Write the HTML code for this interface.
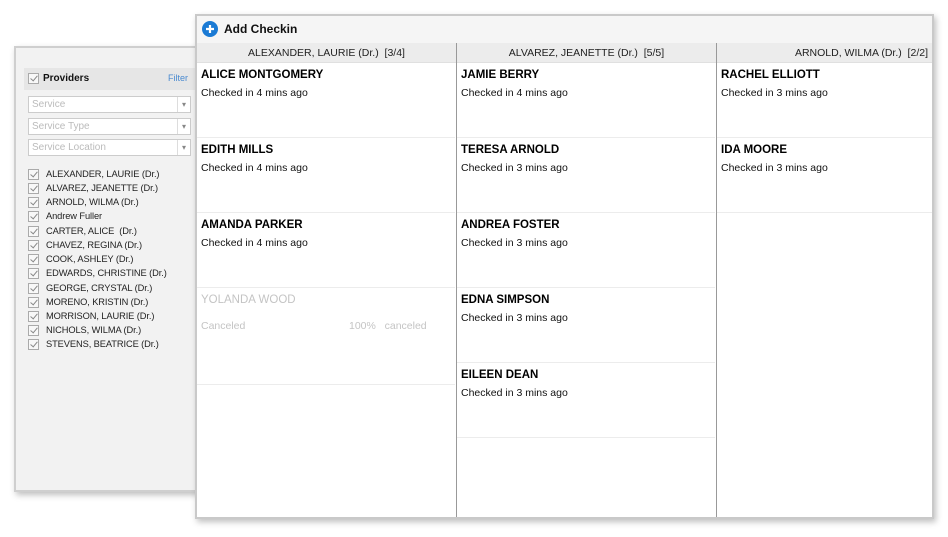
<!DOCTYPE html><html><head><style>
*{margin:0;padding:0;box-sizing:border-box}
body{width:948px;height:533px;background:#fff;position:relative;overflow:hidden;font-family:"Liberation Sans",sans-serif;font-size:11px;color:#111}
.lp{position:absolute;left:14px;top:46px;width:184px;height:446px;background:#f2f2f2;border:2px solid #cfcfcf;box-shadow:2px 3px 6px rgba(0,0,0,.25)}
.ph{position:absolute;left:8px;top:20px;width:172px;height:22px;background:#e6e6e6}
.cb{display:inline-block;width:11px;height:11px;border:1px solid #aaa;background:#f8f8f8;position:relative;vertical-align:middle}
.cb:after{content:"";position:absolute;left:3px;top:0px;width:3px;height:6px;border:solid #888;border-width:0 1.5px 1.5px 0;transform:rotate(40deg)}
.dd{position:absolute;left:12px;width:163px;height:17px;border:1px solid #ccc;background:#fff;color:#bbb;padding:2px 3px;font-size:10px}
.dd:after{content:"▾";position:absolute;right:0;top:0;width:12px;height:15px;border-left:1px solid #ddd;color:#888;font-size:8px;text-align:center;line-height:15px}
.pl{position:absolute;left:12px;font-size:9.3px;color:#222;letter-spacing:-0.1px}
.pl .cb{margin-right:7px;width:11px;height:11px}
.win{position:absolute;left:195px;top:14px;width:739px;height:505px;border:2px solid #c9c9c9;background:#fff;box-shadow:2px 3px 6px rgba(0,0,0,.25)}
.tb{position:absolute;left:0;top:0;width:735px;height:27px;background:#f5f5f5}
.hd{position:absolute;top:27px;height:20px;background:#ececec;border-bottom:1px solid #e0e0e0;font-size:10.5px;line-height:20px;color:#222}
.col{position:absolute;top:27px;height:474px;border-left:1px solid #999}
.card{position:absolute;left:0;width:258px;height:75px;border-bottom:1px solid #ececec}
.card b{position:absolute;left:4px;top:6px;font-size:11.5px;font-weight:bold;color:#000}
.card span{position:absolute;left:4px;top:24px;font-size:10.5px}
</style></head><body>
<div class="lp">
<div class="ph"><span class="cb" style="position:absolute;left:4px;top:5px"></span><b style="position:absolute;left:19px;top:5px;font-size:10px">Providers</b><span style="position:absolute;right:8px;top:5px;color:#4a8ad0;font-size:9px">Filter</span></div>
<div class="dd" style="top:48px">Service</div>
<div class="dd" style="top:70px">Service Type</div>
<div class="dd" style="top:91px">Service Location</div>
<div class="pl" style="top:121px"><span class="cb"></span>ALEXANDER, LAURIE (Dr.)</div>
<div class="pl" style="top:135px"><span class="cb"></span>ALVAREZ, JEANETTE (Dr.)</div>
<div class="pl" style="top:149px"><span class="cb"></span>ARNOLD, WILMA (Dr.)</div>
<div class="pl" style="top:163px"><span class="cb"></span>Andrew Fuller</div>
<div class="pl" style="top:178px"><span class="cb"></span>CARTER, ALICE &nbsp;(Dr.)</div>
<div class="pl" style="top:192px"><span class="cb"></span>CHAVEZ, REGINA (Dr.)</div>
<div class="pl" style="top:206px"><span class="cb"></span>COOK, ASHLEY (Dr.)</div>
<div class="pl" style="top:220px"><span class="cb"></span>EDWARDS, CHRISTINE (Dr.)</div>
<div class="pl" style="top:235px"><span class="cb"></span>GEORGE, CRYSTAL (Dr.)</div>
<div class="pl" style="top:249px"><span class="cb"></span>MORENO, KRISTIN (Dr.)</div>
<div class="pl" style="top:263px"><span class="cb"></span>MORRISON, LAURIE (Dr.)</div>
<div class="pl" style="top:277px"><span class="cb"></span>NICHOLS, WILMA (Dr.)</div>
<div class="pl" style="top:291px"><span class="cb"></span>STEVENS, BEATRICE (Dr.)</div>
</div>
<div class="win">
<div class="tb"><svg style="position:absolute;left:5px;top:5px" width="16" height="16"><circle cx="8" cy="8" r="8" fill="#1a7ad4"/><path d="M8 4v8M4 8h8" stroke="#fff" stroke-width="2.2"/></svg><b style="position:absolute;left:27px;top:6px;font-size:12px">Add Checkin</b></div>
<div class="hd" style="left:0;width:259px;text-align:center">ALEXANDER, LAURIE (Dr.) &nbsp;[3/4]</div>
<div class="hd" style="left:260px;width:259px;text-align:center">ALVAREZ, JEANETTE (Dr.) &nbsp;[5/5]</div>
<div class="hd" style="left:520px;width:215px;text-align:right;padding-right:4px">ARNOLD, WILMA (Dr.) &nbsp;[2/2]</div>
<div class="col" style="left:0;border-left:none;top:47px;width:259px">
<div class="card" style="top:0"><b>ALICE MONTGOMERY</b><span>Checked in 4 mins ago</span></div>
<div class="card" style="top:75px"><b>EDITH MILLS</b><span>Checked in 4 mins ago</span></div>
<div class="card" style="top:150px"><b>AMANDA PARKER</b><span>Checked in 4 mins ago</span></div>
<div class="card" style="top:225px;height:97px"><b style="font-weight:normal;color:#c4c4c4">YOLANDA WOOD</b><span style="color:#c4c4c4;top:32px">Canceled</span><span style="color:#c4c4c4;top:32px;left:152px">100% &nbsp; canceled</span></div>
</div>
<div class="col" style="left:259px;width:260px"><div style="position:absolute;top:20px;left:0;width:259px">
<div class="card" style="top:0"><b>JAMIE BERRY</b><span>Checked in 4 mins ago</span></div>
<div class="card" style="top:75px"><b>TERESA ARNOLD</b><span>Checked in 3 mins ago</span></div>
<div class="card" style="top:150px"><b>ANDREA FOSTER</b><span>Checked in 3 mins ago</span></div>
<div class="card" style="top:225px"><b>EDNA SIMPSON</b><span>Checked in 3 mins ago</span></div>
<div class="card" style="top:300px"><b>EILEEN DEAN</b><span>Checked in 3 mins ago</span></div>
</div></div>
<div class="col" style="left:519px;width:216px"><div style="position:absolute;top:20px;left:0;width:215px">
<div class="card" style="top:0;width:215px"><b>RACHEL ELLIOTT</b><span>Checked in 3 mins ago</span></div>
<div class="card" style="top:75px;width:215px"><b>IDA MOORE</b><span>Checked in 3 mins ago</span></div>
</div></div>
</div>
</body></html>
